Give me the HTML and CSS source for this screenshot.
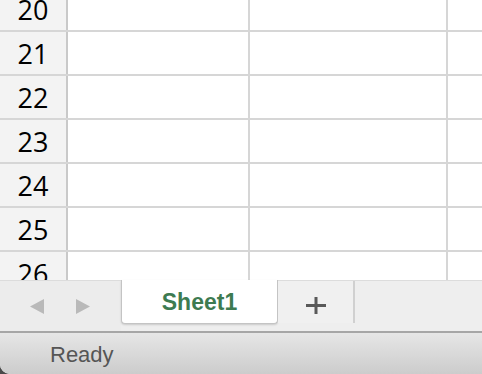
FILE: index.html
```html
<!DOCTYPE html>
<html lang="en">
<head>
  <meta charset="UTF-8">
  <meta name="viewport" content="width=device-width, initial-scale=1.0">
  <title>Sheet1</title>
  <link rel="stylesheet" href="styles.css">
</head>
<body>
  <div class="window">
    <div class="grid">
      <div class="row"><div class="num">20</div><div class="cell"></div><div class="cell"></div><div class="cell last"></div></div>
      <div class="row"><div class="num">21</div><div class="cell"></div><div class="cell"></div><div class="cell last"></div></div>
      <div class="row"><div class="num">22</div><div class="cell"></div><div class="cell"></div><div class="cell last"></div></div>
      <div class="row"><div class="num">23</div><div class="cell"></div><div class="cell"></div><div class="cell last"></div></div>
      <div class="row"><div class="num">24</div><div class="cell"></div><div class="cell"></div><div class="cell last"></div></div>
      <div class="row"><div class="num">25</div><div class="cell"></div><div class="cell"></div><div class="cell last"></div></div>
      <div class="row"><div class="num">26</div><div class="cell"></div><div class="cell"></div><div class="cell last"></div></div>
    </div>

    <div class="tabbar">
      <div class="nav">
        <svg width="14" height="15" viewBox="0 0 14 15"><polygon points="14,0 14,15 0,7.5" fill="#b9b9b9"/></svg>
        <svg width="14" height="15" viewBox="0 0 14 15"><polygon points="0,0 0,15 14,7.5" fill="#b9b9b9"/></svg>
      </div>
      <div class="tab active">Sheet1</div>
      <div class="add">
        <svg width="20" height="17" viewBox="0 0 20 17"><rect x="0" y="7" width="20" height="3" fill="#595959"/><rect x="8.5" y="0" width="3" height="17" fill="#595959"/></svg>
      </div>
      <div class="rest"></div>
    </div>

    <div class="status">Ready</div>
  </div>
</body>
</html>
```

FILE: styles.css
```css
* { margin: 0; padding: 0; box-sizing: border-box; }
html, body {
  width: 482px;
  height: 374px;
  overflow: hidden;
  background: #4a4a4a;
}
body {
  font-family: 'Liberation Sans', Arial, sans-serif;
}
.window {
  display: flex;
  flex-direction: column;
  height: 374px;
  background: #fff;
  border-bottom-left-radius: 10px;
  overflow: hidden;
}

/* Grid */
.grid {
  height: 280px;
  overflow: hidden;
  flex-shrink: 0;
}
.grid .row:first-child { margin-top: -12px; }
.row {
  display: grid;
  grid-template-columns: 68px 182px 198px 1fr;
  height: 44px;
  border-bottom: 2px solid #d6d6d6;
}
.num {
  background: #f3f3f3;
  border-right: 2px solid #c9c9c9;
  display: flex;
  align-items: center;
  justify-content: center;
  font-family: 'Open Sans', 'Liberation Sans', sans-serif;
  font-size: 27px;
  color: #000;
  padding-top: 1px;
}
.cell { border-right: 2px solid #d6d6d6; }
.cell.last { border-right: none; }

/* Sheet tabs */
.tabbar {
  display: flex;
  height: 53px;
  background: #eeeeee;
  border-top: 1px solid #dcdcdc;
  border-bottom: 2px solid #a6a6a6;
  flex-shrink: 0;
}
.nav {
  width: 121px;
  display: flex;
  align-items: center;
  gap: 32px;
  padding-left: 30px;
  background: #ececec;
}
.tab {
  width: 157px;
  height: 44px;
  margin-top: -1px;
  background: #fff;
  border: 1px solid #c4c4c4;
  border-top: none;
  border-radius: 0 0 4px 4px;
  box-shadow: 0 1px 2px rgba(0, 0, 0, 0.15);
  display: flex;
  align-items: center;
  justify-content: center;
  font-size: 23px;
  font-weight: bold;
  color: #3d7b51;
  padding-top: 2px;
}
.add {
  width: 77px;
  height: 42px;
  display: flex;
  align-items: center;
  justify-content: center;
  border-right: 2px solid #d0d0d0;
  background: #f0f0f0;
  padding-top: 6px;
}
.rest { flex: 1; }

/* Status bar */
.status {
  flex: 1;
  background: linear-gradient(#e6e6e6, #cccccc);
  padding-left: 50px;
  display: flex;
  align-items: center;
  font-size: 22px;
  color: #555;
  padding-top: 2px;
}
```
